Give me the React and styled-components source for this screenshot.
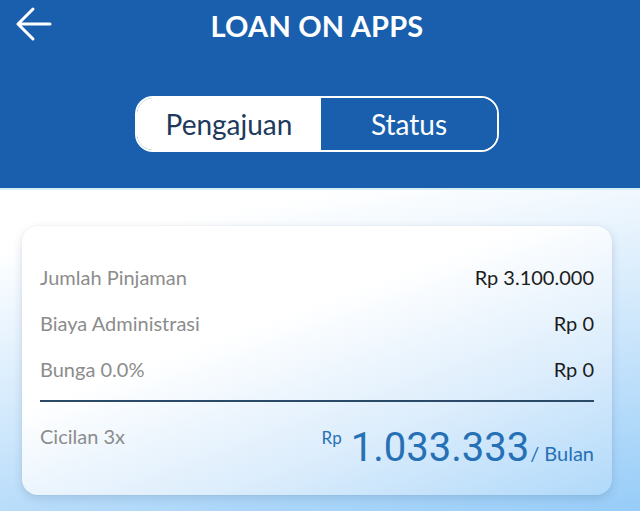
import React, { useState } from "react";
import styled, { createGlobalStyle } from "styled-components";

const GlobalStyle = createGlobalStyle`
  html, body, #root {
    margin: 0;
    height: 100%;
  }
  body {
    font-family: Lato, "Open Sans", sans-serif;
  }
`;

const Screen = styled.div`
  min-height: 100vh;
  display: flex;
  flex-direction: column;
  background: linear-gradient(170deg, #ffffff 0%, #ffffff 40%, #c6e3fb 74%, #96ccf8 100%);
`;

const Header = styled.header`
  height: 188px;
  padding-right: 6px;
  background-color: #1a5fad;
  border-bottom: 2px solid #d4eef6;
  display: flex;
  flex-direction: column;
  align-items: center;
  position: relative;
`;

const TopBar = styled.div`
  width: 100%;
  height: 48px;
  display: flex;
  align-items: center;
  justify-content: center;
`;

const BackButton = styled.button`
  position: absolute;
  left: 15px;
  top: 6px;
  padding: 0;
  border: none;
  background: none;
  cursor: pointer;
  display: flex;
`;

const Title = styled.h1`
  margin: 0;
  padding-top: 2px;
  font-size: 29px;
  font-weight: 700;
  color: #ffffff;
  letter-spacing: 0.2px;
`;

const Toggle = styled.div`
  margin-top: 48px;
  width: 364px;
  height: 56px;
  box-sizing: border-box;
  border: 2px solid #ffffff;
  border-radius: 18px;
  overflow: hidden;
  display: flex;
`;

const ToggleItem = styled.button`
  flex: ${(p) => (p.$first ? "0 0 184px" : "1")};
  border: none;
  padding: 0;
  font-family: inherit;
  font-size: 28px;
  cursor: pointer;
  background-color: ${(p) => (p.$active ? "#ffffff" : "#1a5fad")};
  color: ${(p) => (p.$active ? "#1d3a5c" : "#ffffff")};
`;

const Content = styled.main`
  flex: 1;
  padding: 36px 28px 18px 22px;
`;

const Card = styled.section`
  border-radius: 16px;
  padding: 28px 18px 23px 18px;
  background: linear-gradient(160deg, #ffffff 0%, #ffffff 38%, #dcedfc 70%, #b0d9fa 100%);
  box-shadow: 0 3px 10px rgba(40, 70, 110, 0.18), 0 0 2px rgba(0, 0, 0, 0.06);
`;

const Row = styled.div`
  height: 46px;
  display: flex;
  align-items: center;
  justify-content: space-between;
  font-size: 20px;
`;

const Label = styled.span`
  color: #8c8c8c;
`;

const Value = styled.span`
  color: #1c1c1c;
`;

const Divider = styled.hr`
  margin: 8px 0 0;
  border: none;
  height: 2px;
  background-color: #2b4a68;
`;

const TotalRow = styled.div`
  padding-top: 22px;
  display: flex;
  justify-content: space-between;
  align-items: flex-start;
  font-size: 20px;
`;

const Amount = styled.div`
  display: flex;
  align-items: baseline;
  color: #2670b5;
`;

const Currency = styled.span`
  font-size: 17px;
  align-self: flex-start;
  margin-top: 3px;
  margin-right: 9px;
`;

const Big = styled.span`
  font-family: Roboto, "Liberation Sans", sans-serif;
  font-size: 40px;
  line-height: 48px;
`;

const Unit = styled.span`
  font-size: 20px;
  margin-left: 1px;
`;

const BackIcon = () => (
  <svg width="38" height="36" viewBox="0 0 38 36" fill="none">
    <path
      d="M3 18 H35 M18 3 L3 18 L18 33"
      stroke="#ffffff"
      strokeWidth="3"
      strokeLinecap="round"
      strokeLinejoin="round"
    />
  </svg>
);

const rows = [
  { label: "Jumlah Pinjaman", value: "Rp 3.100.000" },
  { label: "Biaya Administrasi", value: "Rp 0" },
  { label: "Bunga 0.0%", value: "Rp 0" },
];

export default function App() {
  const [tab, setTab] = useState("pengajuan");

  return (
    <Screen>
      <GlobalStyle />
      <Header>
        <BackButton aria-label="Kembali">
          <BackIcon />
        </BackButton>
        <TopBar>
          <Title>LOAN ON APPS</Title>
        </TopBar>
        <Toggle>
          <ToggleItem
            $first
            $active={tab === "pengajuan"}
            onClick={() => setTab("pengajuan")}
          >
            Pengajuan
          </ToggleItem>
          <ToggleItem
            $active={tab === "status"}
            onClick={() => setTab("status")}
          >
            Status
          </ToggleItem>
        </Toggle>
      </Header>
      <Content>
        <Card>
          {rows.map((r) => (
            <Row key={r.label}>
              <Label>{r.label}</Label>
              <Value>{r.value}</Value>
            </Row>
          ))}
          <Divider />
          <TotalRow>
            <Label>Cicilan 3x</Label>
            <Amount>
              <Currency>Rp</Currency>
              <Big>1.033.333</Big>
              <Unit>/ Bulan</Unit>
            </Amount>
          </TotalRow>
        </Card>
      </Content>
    </Screen>
  );
}
